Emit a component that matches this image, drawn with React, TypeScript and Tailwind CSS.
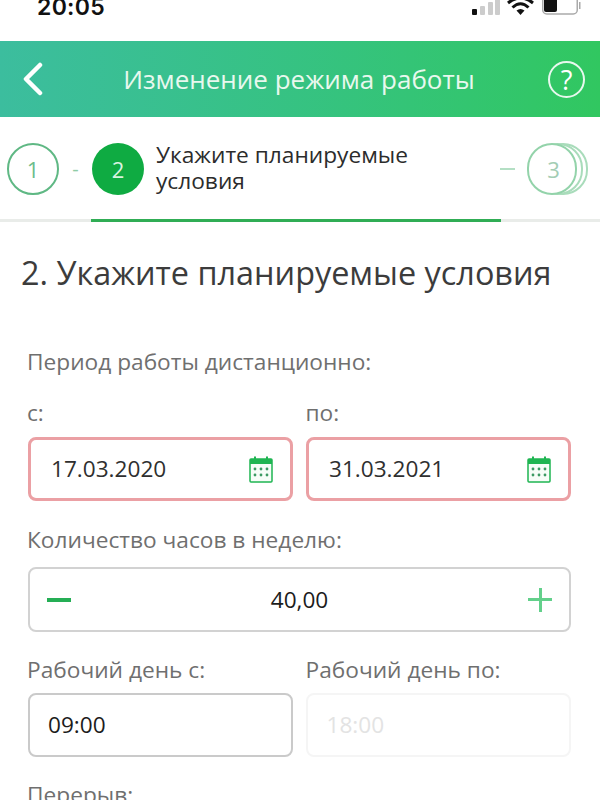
import React from 'react';

const font = { fontFamily: '"Open Sans", sans-serif' };

const CalendarIcon = () => (
  <svg width="24" height="27" viewBox="0 0 24 27" className="shrink-0">
    <rect x="1" y="3" width="22" height="23" fill="#f6fdf8" stroke="#1fb552" strokeWidth="1.5" rx="1" />
    <rect x="1" y="3" width="22" height="5" fill="#1fb552" />
    <rect x="5" y="0.5" width="2" height="4.5" fill="#1fb552" />
    <rect x="17" y="0.5" width="2" height="4.5" fill="#1fb552" />
    {[6, 12, 18].map((x) =>
      [13, 19].map((y) => <circle key={`${x}-${y}`} cx={x} cy={y} r="1.4" fill="#3c9a63" />),
    )}
  </svg>
);

const StatusBar = () => (
  <div className="h-[41px] bg-white flex items-start justify-between pl-[37px] pr-[18px] overflow-hidden">
    <span className="text-[23px] leading-none font-semibold text-[#111] mt-[-4px] tracking-[0.3px]" style={{ fontFamily: '"Inter", sans-serif' }}>
      20:05
    </span>
    <svg width="110" height="20" viewBox="0 0 110 20" className="mt-[-2px]">
      <rect x="0" y="11" width="5" height="6" rx="1" fill="#111" />
      <rect x="8" y="8" width="5" height="9" rx="1" fill="#ccc" />
      <rect x="16" y="4" width="5" height="13" rx="1" fill="#ccc" />
      <rect x="23" y="0" width="5" height="17" rx="1" fill="#ccc" />
      <path d="M36 5 Q48.500 -5 61 5" fill="none" stroke="#111" strokeWidth="3" />
      <path d="M40.500 9.500 Q48.500 2 56.500 9.500" fill="none" stroke="#111" strokeWidth="3" />
      <path d="M44.500 12.500 Q48.500 9.500 52.500 12.500 L48.500 17 Z" fill="#111" />
      <rect x="70.750" y="-3" width="34.500" height="19" rx="4" fill="none" stroke="#aaa" strokeWidth="1.500" />
      <rect x="72" y="0" width="13" height="14" rx="2" fill="#111" />
      <rect x="107" y="4" width="1.500" height="7" fill="#aaa" />
    </svg>
  </div>
);

const Header = () => (
  <div className="h-[76px] flex items-center justify-between pl-[22px] pr-[15px] bg-gradient-to-r from-[#3cbd9e] to-[#31c760] text-white">
    <svg width="22" height="34" viewBox="0 0 22 34">
      <path d="M18 3 L4 17 L18 31" fill="none" stroke="#fff" strokeWidth="4.500" strokeLinecap="round" strokeLinejoin="round" />
    </svg>
    <span className="text-[26px] leading-none text-[#e8f8ee] ml-[6px]">Изменение режима работы</span>
    <div className="w-[37px] h-[37px] rounded-full border-[2.5px] border-[#e8f8ee] flex items-center justify-center text-[27px] font-normal leading-none">
      ?
    </div>
  </div>
);

const Stepper = () => (
  <div className="h-[105px] relative">
    <div className="h-[102px] flex items-center pl-[7px] pr-[13px] pt-[2px]">
      <div className="w-[52px] h-[52px] rounded-full border-2 border-[#5fb884] flex items-center justify-center text-[22px] text-[#6dbd8c]">1</div>
      <span className="w-[33px] text-center text-[20px] text-[#8fcca6]">-</span>
      <div className="w-[52px] h-[52px] rounded-full bg-[#0fab42] flex items-center justify-center text-[22px] text-[#d8f3e0]">2</div>
      <div className="ml-[12px] flex-1 text-[22.7px] leading-[26px] text-[#2c2c2c] mt-[-3px]">
        Укажите планируемые
        <br />
        условия
      </div>
      <span className="w-[15px] h-[2px] bg-[#b4dfc4] mr-[12px]" />
      <div className="relative w-[60px] h-[52px]">
        <div className="absolute left-[11px] top-0 w-[50px] h-[52px] rounded-full border-2 border-[#a9dcbb]" />
        <div className="absolute left-[6px] top-0 w-[50px] h-[52px] rounded-full border-2 border-[#a9dcbb]" />
        <div className="absolute left-0 top-0 w-[50px] h-[52px] rounded-full border-2 border-[#93d3aa] bg-white flex items-center justify-center text-[22px] pl-[3px] text-[#a3cdb4]">3</div>
      </div>
    </div>
    <div className="h-[3px] bg-[#e9ece9] flex pl-[91px] pr-[99px]">
      <div className="flex-1 bg-[#30ad55]" />
    </div>
  </div>
);

const Field = ({ value, error, disabled, icon }: { value: string; error?: boolean; disabled?: boolean; icon?: boolean }) => (
  <div
    className={`h-[64px] flex-1 rounded-[8px] flex items-center justify-between text-[22.6px] ${
      error
        ? 'border-[3px] border-[#eba0a4] pl-[20px] pr-[17px] text-[#2f2f2f]'
        : disabled
          ? 'border-2 border-[#f5f5f5] pl-[19px] text-[#e3e3e3]'
          : 'border-2 border-[#cacaca] pl-[18px] text-[#1c1c1c]'
    }`}
  >
    <span>{value}</span>
    {icon && <CalendarIcon />}
  </div>
);

const Label = ({ children, className = '' }: { children: React.ReactNode; className?: string }) => (
  <div className={`text-[22.7px] leading-[30px] text-[#6f6f6f] ${className}`}>{children}</div>
);

export default function App() {
  return (
    <div className="w-[600px] h-[800px] overflow-hidden bg-white" style={font}>
      <StatusBar />
      <Header />
      <Stepper />
      <div className="pl-[28px] pr-[29px]">
        <h1 className="text-[32.4px] leading-[44px] text-[#3c3c3c] ml-[-7px] mt-[28px] whitespace-nowrap">2. Укажите планируемые условия</h1>
        <Label className="mt-[53px] ml-[-1px]">Период работы дистанционно:</Label>
        <div className="flex gap-[13px] mt-[21px] ml-[-1px]">
          <Label className="flex-1">с:</Label>
          <Label className="flex-1">по:</Label>
        </div>
        <div className="flex gap-[13px] mt-[9px]">
          <Field value="17.03.2020" error icon />
          <Field value="31.03.2021" error icon />
        </div>
        <Label className="mt-[24px] ml-[-1px]">Количество часов в неделю:</Label>
        <div className="h-[65px] mt-[12px] rounded-[8px] border-2 border-[#d2d2d2] flex items-center justify-between pl-[17px] pr-[17px] text-[22.6px] text-[#1c1c1c]">
          <span className="w-[24px] h-[4px] bg-[#25ae55]" />
          <span>40,00</span>
          <span className="relative w-[24px] h-[24px] flex items-center justify-center">
            <span className="absolute w-[24px] h-[3px] bg-[#63d08b]" />
            <span className="absolute w-[3px] h-[24px] bg-[#63d08b]" />
          </span>
        </div>
        <div className="flex gap-[13px] mt-[23px] ml-[-1px]">
          <Label className="flex-1">Рабочий день с:</Label>
          <Label className="flex-1">Рабочий день по:</Label>
        </div>
        <div className="flex gap-[13px] mt-[8px]">
          <Field value="09:00" />
          <Field value="18:00" disabled />
        </div>
        <Label className="mt-[23px] ml-[-1px]">Перерыв:</Label>
      </div>
    </div>
  );
}
